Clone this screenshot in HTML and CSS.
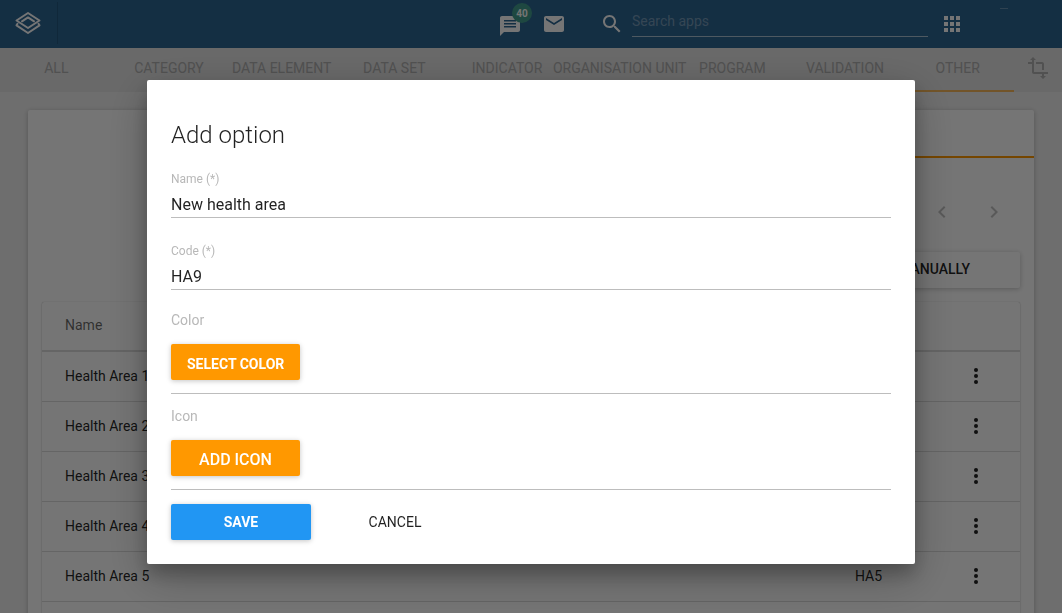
FILE: index.html
```html
<!DOCTYPE html>
<html lang="en">
<head>
<meta charset="utf-8">
<title>Maintenance - Add option</title>
<link rel="stylesheet" href="styles.css">
</head>
<body>
<header class="header">
  <a class="brand" href="#" aria-label="Home">
    <svg width="26" height="24" viewBox="0 0 26 24" fill="none" stroke="#fff" stroke-width="2" stroke-linejoin="round" stroke-linecap="round"><path d="M13 2 24.500 9.500 13 17 1.500 9.500Z"/><path d="M7 10.300 13 6.400l6 3.900"/><path d="M2.500 12.800 1.500 14.300 13 22 24.500 14.300l-1-1.500"/></svg>
  </a>
  <nav class="header-tools">
    <a class="tool messages" href="#" aria-label="Interpretations">
      <svg viewBox="0 0 24 24"><path d="M20 2H4c-1.1 0-1.99.9-1.99 2L2 22l4-4h14c1.1 0 2-.9 2-2V4c0-1.100-.9-2-2-2zM6 9h12v1.500H6V9zm12 4.500H6V12h12v1.500zm0-6H6V6h12v1.500z"/></svg>
      <span class="badge">40</span>
    </a>
    <a class="tool" href="#" aria-label="Messages">
      <svg viewBox="0 0 24 24"><path d="M20 4H4c-1.100 0-1.990.9-1.990 2L2 18c0 1.100.9 2 2 2h16c1.100 0 2-.9 2-2V6c0-1.100-.9-2-2-2zm0 4l-8 5-8-5V6l8 5 8-5v2z"/></svg>
    </a>
    <label class="search">
      <svg class="search-icon" viewBox="0 0 24 24"><path d="M15.500 14h-.79l-.28-.27C15.410 12.590 16 11.110 16 9.500 16 5.910 13.090 3 9.500 3S3 5.910 3 9.500 5.910 16 9.500 16c1.610 0 3.090-.59 4.230-1.570l.27.28v.79l5 4.990L20.490 19l-4.990-5zm-6 0C7.010 14 5 11.990 5 9.500S7.010 5 9.500 5 14 7.010 14 9.500 11.990 14 9.500 14z"/></svg>
      <input class="search-input" type="text" placeholder="Search apps" aria-label="Search apps">
    </label>
    <a class="tool" href="#" aria-label="Apps">
      <svg viewBox="0 0 24 24"><path d="M4 8h4V4H4v4zm6 12h4v-4h-4v4zm-6 0h4v-4H4v4zm0-6h4v-4H4v4zm6 0h4v-4h-4v4zm6-10v4h4V4h-4zm-6 4h4V4h-4v4zm6 6h4v-4h-4v4zm0 6h4v-4h-4v4z"/></svg>
    </a>
    <span class="profile"></span>
  </nav>
</header>

<nav class="tabs">
  <a class="tab" href="#">All</a>
  <a class="tab" href="#">Category</a>
  <a class="tab" href="#">Data element</a>
  <a class="tab" href="#">Data set</a>
  <a class="tab" href="#">Indicator</a>
  <a class="tab" href="#">Organisation unit</a>
  <a class="tab" href="#">Program</a>
  <a class="tab" href="#">Validation</a>
  <a class="tab tab-active" href="#">Other</a>
  <button class="tabs-action" type="button" aria-label="Transform">
    <svg viewBox="0 0 24 24"><path d="M22 18v-2H8V4h2L7 1 4 4h2v2H2v2h4v8c0 1.100.9 2 2 2h8v2h-2l3 3 3-3h-2v-2h4zM10 8h6v6h2V8c0-1.100-.9-2-2-2h-6v2z"/></svg>
  </button>
</nav>

<main class="card">
  <div class="card-tabs"><span class="card-tab"></span><span class="card-tab card-tab-active"></span></div>
  <div class="card-body">
    <div class="pager">
      <button class="pager-button" type="button" aria-label="Previous page"><svg viewBox="0 0 24 24"><path d="M15.410 7.410L14 6l-6 6 6 6 1.410-1.410L10.830 12z"/></svg></button>
      <button class="pager-button" type="button" aria-label="Next page"><svg viewBox="0 0 24 24"><path d="M10 6L8.590 7.410 13.170 12l-4.580 4.590L10 18l6-6z"/></svg></button>
    </div>
    <div class="toolbar"><button class="sort-button" type="button">Manually</button></div>
    <table class="options">
      <thead><tr><th class="col-name">Name</th><th class="col-code"></th><th class="col-menu"></th></tr></thead>
      <tbody>
        <tr><td>Health Area 1</td><td></td><td><button class="row-menu" type="button" aria-label="Row actions"><svg viewBox="0 0 24 24"><use href="#dots"/></svg></button></td></tr>
        <tr><td>Health Area 2</td><td></td><td><button class="row-menu" type="button" aria-label="Row actions"><svg viewBox="0 0 24 24"><use href="#dots"/></svg></button></td></tr>
        <tr><td>Health Area 3</td><td></td><td><button class="row-menu" type="button" aria-label="Row actions"><svg viewBox="0 0 24 24"><use href="#dots"/></svg></button></td></tr>
        <tr><td>Health Area 4</td><td></td><td><button class="row-menu" type="button" aria-label="Row actions"><svg viewBox="0 0 24 24"><use href="#dots"/></svg></button></td></tr>
        <tr><td>Health Area 5</td><td>HA5</td><td><button class="row-menu" type="button" aria-label="Row actions"><svg viewBox="0 0 24 24"><use href="#dots"/></svg></button></td></tr>
        <tr><td></td><td></td><td></td></tr>
      </tbody>
    </table>
  </div>
</main>

<svg class="symbols" aria-hidden="true"><symbol id="dots" viewBox="0 0 24 24"><circle cx="12" cy="6" r="2"/><circle cx="12" cy="12" r="2"/><circle cx="12" cy="18" r="2"/></symbol></svg>

<div class="overlay">
  <form class="dialog" role="dialog" aria-labelledby="dialog-title">
    <h1 class="dialog-title" id="dialog-title">Add option</h1>
    <div class="field">
      <label class="field-label" for="name">Name (*)</label>
      <input class="field-input" id="name" type="text" value="New health area">
    </div>
    <div class="field">
      <label class="field-label" for="code">Code (*)</label>
      <input class="field-input" id="code" type="text" value="HA9">
    </div>
    <div class="picker">
      <label class="picker-label" for="color">Color</label>
      <button class="button button-accent" id="color" type="button">Select color</button>
    </div>
    <div class="picker">
      <label class="picker-label" for="icon">Icon</label>
      <button class="button button-accent button-large" id="icon" type="button">Add icon</button>
    </div>
    <div class="actions">
      <button class="button button-primary" type="submit">Save</button>
      <button class="button button-flat" type="button">Cancel</button>
    </div>
  </form>
</div>
</body>
</html>
```
FILE: styles.css
```css
* { box-sizing: border-box; }

html { height: 100%; }

body {
  margin: 0;
  height: 100%;
  overflow: hidden;
  background: #f0f0f0;
  color: rgba(0, 0, 0, 0.87);
  font-family: Roboto, sans-serif;
  font-size: 14px;
}

button, input { font-family: inherit; }
button { padding: 0; border: 0; background: none; color: inherit; cursor: pointer; }
a { color: inherit; text-decoration: none; }
svg { display: block; fill: currentColor; }
.symbols { display: none; }

.header {
  display: flex;
  justify-content: space-between;
  height: 48px;
  background: #2c6693;
  color: #fff;
}

.brand {
  display: flex;
  align-items: center;
  width: 58px;
  height: 42px;
  margin-top: 2px;
  padding-left: 15px;
  border-right: 1px solid #24577f;
}
.brand svg { fill: none; }

.header-tools { display: flex; align-items: center; }
.tool { width: 24px; height: 24px; }
.tool svg { width: 24px; height: 24px; }
.messages { position: relative; margin: 4px 20px 0 0; }

.badge {
  position: absolute;
  top: -11px;
  left: 14px;
  width: 20px;
  height: 20px;
  padding-top: 1px;
  border-radius: 50%;
  background: #439e8e;
  font-size: 10px;
  font-weight: 700;
  line-height: 20px;
  text-align: center;
}

.search { display: flex; align-items: center; margin: 0 12px 0 34px; }
.search-icon { width: 24px; height: 24px; margin-right: 8px; }
.search-input {
  width: 296px;
  height: 32px;
  margin-bottom: 6px;
  padding: 2px 0 1px;
  border: 0;
  border-bottom: 1px solid rgba(255, 255, 255, 0.6);
  outline: 0;
  background: none;
  color: #fff;
  font-size: 14px;
}
.search-input::placeholder { color: rgba(255, 255, 255, 0.35); }

.profile {
  align-self: flex-start;
  width: 8px;
  height: 1px;
  margin: 8px 54px 0 36px;
  background: #6791b1;
}

.tabs { display: flex; height: 44px; background: #e4e4e4; color: #b0b0b0; }
.tab {
  flex: 1 1 0;
  min-width: 0;
  border-bottom: 2px solid transparent;
  line-height: 40px;
  text-align: center;
  text-transform: uppercase;
  white-space: nowrap;
  display: flex;
  justify-content: center;
}
.tab-active { border-color: #f8b85a; }
.tabs-action { width: 48px; height: 40px; padding-left: 12px; }
.tabs-action svg { width: 24px; height: 24px; }

.card {
  margin: 18px 28px 0;
  border-radius: 2px;
  background: #fff;
  box-shadow: 0 1px 6px rgba(0, 0, 0, 0.12), 0 1px 4px rgba(0, 0, 0, 0.12);
}
.card-tabs { display: flex; height: 48px; }
.card-tab { flex: 1; }
.card-tab-active { border-bottom: 2px solid #ff9800; }
.card-body { padding: 30px 14px; }

.pager { display: flex; justify-content: flex-end; gap: 4px; padding-right: 2px; color: #c2c2c2; }
.pager-button { display: grid; place-items: center; width: 48px; height: 48px; }
.pager-button svg { width: 24px; height: 24px; }

.toolbar { display: flex; justify-content: flex-end; padding: 16px 0 14px; }
.sort-button {
  width: 240px;
  height: 36px;
  padding: 0 50px 2px 0;
  border-radius: 2px;
  background: #fff;
  box-shadow: 0 1px 6px rgba(0, 0, 0, 0.12), 0 1px 4px rgba(0, 0, 0, 0.12);
  font-size: 14px;
  font-weight: 500;
  text-align: right;
  text-transform: uppercase;
}

.options {
  width: 100%;
  border-collapse: separate;
  border-spacing: 0;
  table-layout: fixed;
  border-radius: 2px;
  box-shadow: 0 1px 2px rgba(0, 0, 0, 0.2), 0 0 1px rgba(0, 0, 0, 0.3);
}
.options th, .options td {
  height: 50px;
  padding: 0 0 2px 23px;
  border-bottom: 1px solid #dcdcdc;
  font-weight: 400;
  text-align: left;
}
.options th { border-bottom: 2px solid #dcdcdc; color: rgba(0, 0, 0, 0.6); }
.options td:last-child { padding-left: 6px; }
.col-code { width: 90px; }
.col-menu { width: 98px; }
.row-menu { display: grid; place-items: center; width: 96px; height: 40px; }
.row-menu svg { width: 24px; height: 24px; }

.overlay {
  position: fixed;
  inset: 0;
  display: flex;
  align-items: flex-start;
  justify-content: center;
  padding: 80px 24px 0;
  background: rgba(0, 0, 0, 0.54);
}

.dialog {
  width: 100%;
  max-width: 768px;
  padding: 40px 24px 24px;
  border-radius: 2px;
  background: #fff;
  box-shadow: 0 14px 45px rgba(0, 0, 0, 0.25), 0 10px 18px rgba(0, 0, 0, 0.22);
}
.dialog-title { margin: 0 0 21px; font-size: 24px; font-weight: 300; line-height: 30px; }

.field { display: flex; flex-direction: column; margin-bottom: 25px; }
.field:nth-of-type(2) { margin-bottom: 20px; }
.field-label { color: #b8b8b8; font-size: 12px; line-height: 16px; }
.field-input {
  width: 100%;
  height: 31px;
  padding: 4px 0 0;
  border: 0;
  border-bottom: 1px solid #bdbdbd;
  outline: 0;
  background: none;
  color: rgba(0, 0, 0, 0.87);
  font-size: 16px;
}

.picker {
  display: flex;
  flex-direction: column;
  align-items: flex-start;
  gap: 14px;
  margin-bottom: 12px;
  padding-bottom: 13px;
  border-bottom: 1px solid #bdbdbd;
}
.picker-label { color: #b8b8b8; line-height: 20px; }

.button {
  height: 36px;
  border-radius: 2px;
  font-size: 14px;
  line-height: 36px;
  text-transform: uppercase;
}
.button-accent, .button-primary {
  color: #fff;
  font-weight: 700;
  box-shadow: 0 1px 6px rgba(0, 0, 0, 0.12), 0 1px 4px rgba(0, 0, 0, 0.12);
}
.button-accent { min-width: 129px; padding: 4px 16px 0; line-height: 32px; background: #ff9800; }
.button-large { font-size: 16px; font-weight: 500; }
.button-primary { background: #2196f3; }

.actions { display: flex; gap: 14px; padding-top: 2px; }
.actions .button { width: 140px; }
```
